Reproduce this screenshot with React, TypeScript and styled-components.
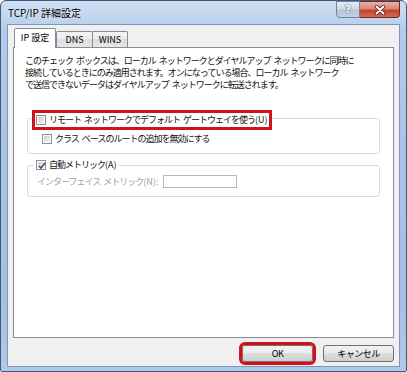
import React from 'react';
import styled, { createGlobalStyle, css } from 'styled-components';

const Global = createGlobalStyle`
  html, body {
    margin: 0;
    padding: 0;
    background: #fff;
  }
`

const Window = styled.div`
  width: 407px;
  height: 372px;
  box-sizing: border-box;
  border: 1px solid #42597a;
  border-radius: 6px 6px 2px 2px;
  background: linear-gradient(180deg, #cfdff2 0%, #b4cceb 8%, #a8c4e6 40%, #a3c0e3 80%, #b0c9e8 100%);
  padding: 0 6px 4px 6px;
  display: flex;
  flex-direction: column;
  font-family: "Noto Sans CJK JP", "Noto Sans", sans-serif;
  color: #111;
`

const TitleBar = styled.div`
  height: 23px;
  display: flex;
  align-items: flex-start;
`

const Title = styled.div`
  align-self: center;
  padding-left: 1px;
  font-size: 10px;
  line-height: 12px;
  color: #000;
  text-shadow: 0 0 6px rgba(255, 255, 255, 0.9);
`

const Caption = styled.div`
  margin-left: auto;
  display: flex;
`

const CaptionButton = styled.div<{ $close?: boolean }>`
  box-sizing: border-box;
  height: 17px;
  width: ${p => p.$close ? 40 : 24}px;
  display: flex;
  align-items: center;
  justify-content: center;
  font-family: "DejaVu Sans", sans-serif;
  font-weight: bold;
  color: #fff;
  ${p => p.$close ? css`
    border: 1px solid #6e2a20;
    border-left: none;
    border-radius: 0 0 4px 0;
    background: linear-gradient(180deg, #eab1a3 0%, #d98874 45%, #c4452e 55%, #d66a4c 100%);
  ` : css`
    border: 1px solid #6e82a0;
    border-radius: 0 0 0 4px;
    background: linear-gradient(180deg, #e3ebf5 0%, #cfdbea 45%, #b3c4da 55%, #c3d3e6 100%);
    font-size: 11px;
    text-shadow: 0 0 2px #50607a, 0 0 1px #50607a;
  `}
`

const Client = styled.div`
  flex: 1;
  display: flex;
  flex-direction: column;
  background: #f0f0f0;
  border: 1px solid #7d96b8;
  padding: 3px 5px 4px 5px;
`

const TabRow = styled.div`
  height: 19px;
  display: flex;
  align-items: flex-end;
  padding-left: 1px;
`

const Tab = styled.div<{ $active?: boolean; $w: number }>`
  box-sizing: border-box;
  width: ${p => p.$w}px;
  border: 1px solid #898c95;
  border-bottom: none;
  border-radius: 2px 2px 0 0;
  display: flex;
  align-items: center;
  justify-content: center;
  font-size: 9px;
  color: #000;
  ${p => p.$active ? css`
    position: relative;
    z-index: 1;
    height: 20px;
    margin-bottom: -1px;
    padding-bottom: 2px;
    background: #fff;
  ` : css`
    height: 16px;
    margin-left: -1px;
    background: linear-gradient(180deg, #f3f3f3 0%, #ebebeb 50%, #dedede 50%, #e6e6e6 100%);
    &:nth-child(2) { margin-left: 0; }
  `}
`

const Panel = styled.div`
  flex: 1;
  background: #fff;
  border: 1px solid #898c95;
  padding: 7px 11px;
  display: flex;
  flex-direction: column;
  align-items: stretch;
`

const Para = styled.p`
  margin: 0;
  font-size: 9px;
  line-height: 12px;
  letter-spacing: -1px;
  word-spacing: 2px;
  white-space: nowrap;
`

const Group = styled.fieldset<{ $top: number }>`
  margin: ${p => p.$top}px 2px 0 2px;
  padding: ${p => p.$top > 10 ? 3 : 4}px 8px 8px 6px;
  border: 1px solid #dcdcdc;
  border-radius: 3px;
  min-width: 0;
`

const Legend = styled.legend`
  padding: 0 1px;
  margin-left: 0;
`

const Highlight = styled.span`
  display: inline-flex;
  padding: 1px;
  outline: 3px solid #d0121b;
`

const Row = styled.div<{ $indent: number }>`
  display: flex;
  align-items: center;
  margin-left: ${p => p.$indent}px;
  font-size: 9px;
  line-height: 12px;
  letter-spacing: -1px;
  word-spacing: 2px;
  white-space: pre;
`

const Key = styled.span`
  letter-spacing: 0;
`

const Box = styled.span`
  position: relative;
  box-sizing: border-box;
  width: 10px;
  height: 10px;
  margin-right: 3px;
  flex: none;
  border: 1px solid #8e8f8f;
  background: #fff;
  &::after {
    content: '';
    position: absolute;
    inset: 1px;
    background: linear-gradient(135deg, #c5c9cf 0%, #e4e6e9 60%, #f4f4f4 100%);
  }
  svg {
    position: absolute;
    left: 0;
    top: 0;
    z-index: 1;
  }
`

const DisabledLabel = styled.span`
  width: 126px;
  color: #a3a3a3;
`

const Field = styled.span`
  box-sizing: border-box;
  width: 74px;
  height: 13px;
  border: 1px solid #b9b9b9;
  background: #fff;
`

const Footer = styled.div`
  display: flex;
  justify-content: flex-end;
  gap: 10px;
  padding-top: 7px;
`

const Button = styled.div<{ $marked?: boolean }>`
  box-sizing: border-box;
  width: 71px;
  height: 17px;
  border: 1px solid #707070;
  border-radius: 3px;
  background: linear-gradient(180deg, #f2f2f2 0%, #ebebeb 50%, #dddddd 50%, #cfcfcf 100%);
  display: flex;
  align-items: center;
  justify-content: center;
  font-size: 9px;
  letter-spacing: -0.5px;
  color: #000;
  ${p => p.$marked && css`
    outline: 3px solid #d0121b;
  `}
`

function Check({ checked }: { checked?: boolean }) {
  return (
    <Box>
      {checked && (
        <svg width="10" height="10" viewBox="0 0 10 10">
          <path d="M2.2 5 L4 7.2 L8 2" fill="none" stroke="#3a4f86" strokeWidth="1.6" />
        </svg>
      )}
    </Box>
  )
}

function CloseGlyph() {
  return (
    <svg width="12" height="10" viewBox="0 0 12 10">
      <path d="M2.5 1.5 L9.5 8.5 M9.5 1.5 L2.5 8.5" stroke="#5a1c12" strokeWidth="3.6" strokeLinecap="round" />
      <path d="M2.5 1.5 L9.5 8.5 M9.5 1.5 L2.5 8.5" stroke="#fff" strokeWidth="2" strokeLinecap="round" />
    </svg>
  )
}

export default function App() {
  return (
    <>
      <Global />
      <Window>
        <TitleBar>
          <Title>TCP/IP 詳細設定</Title>
          <Caption>
            <CaptionButton>?</CaptionButton>
            <CaptionButton $close><CloseGlyph /></CaptionButton>
          </Caption>
        </TitleBar>
        <Client>
          <TabRow>
            <Tab $active $w={42}>IP 設定</Tab>
            <Tab $w={37}>DNS</Tab>
            <Tab $w={36}>WINS</Tab>
          </TabRow>
          <Panel>
            <Para>
              このチェック ボックスは、ローカル ネットワークとダイヤルアップ ネットワークに同時に<br />
              接続しているときにのみ適用されます。オンになっている場合、ローカル ネットワーク<br />
              で送信できないデータはダイヤルアップ ネットワークに転送されます。
            </Para>
            <Group $top={15}>
              <Legend>
                <Highlight>
                  <Row $indent={0}>
                    <Check />
                    {'リモート ネットワークでデフォルト ゲートウェイを使う'}<Key>(U)</Key>
                  </Row>
                </Highlight>
              </Legend>
              <Row $indent={8}>
                <Check />
                {'クラス ベースのルートの追加を無効にする'}
              </Row>
            </Group>
            <Group $top={5}>
              <Legend>
                <Row $indent={1}>
                  <Check checked />
                  {'自動メトリック'}<Key>(A)</Key>
                </Row>
              </Legend>
              <Row $indent={3}>
                <DisabledLabel>{'インターフェイス メトリック'}<Key>(N):</Key></DisabledLabel>
                <Field />
              </Row>
            </Group>
          </Panel>
          <Footer>
            <Button $marked>OK</Button>
            <Button>キャンセル</Button>
          </Footer>
        </Client>
      </Window>
    </>
  );
}
